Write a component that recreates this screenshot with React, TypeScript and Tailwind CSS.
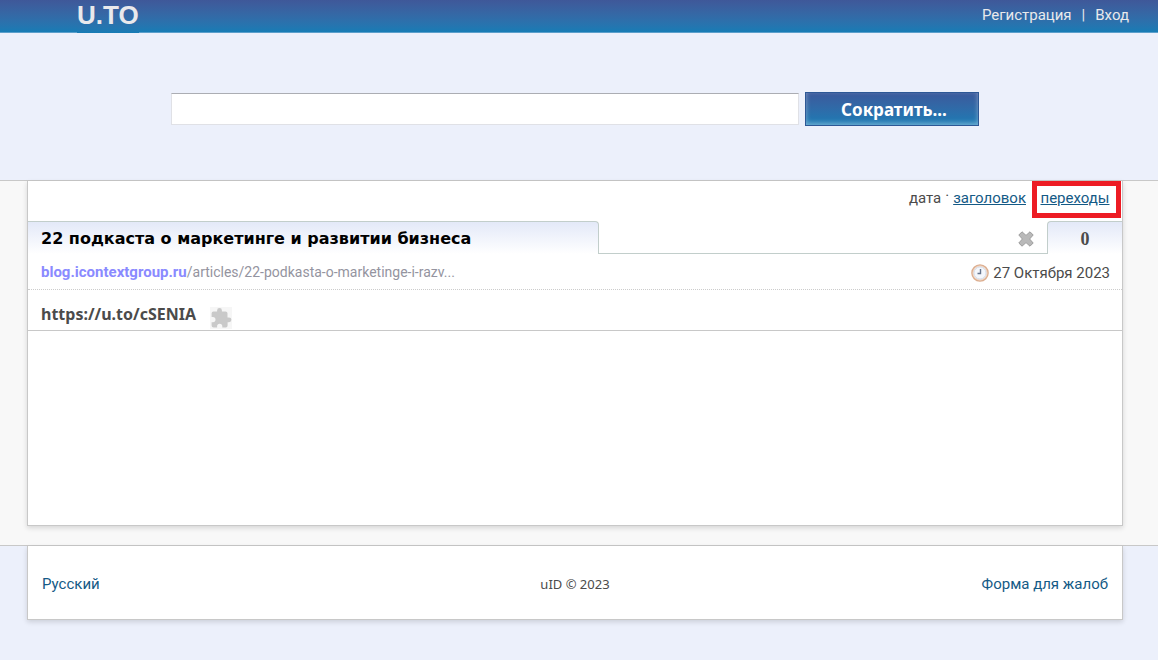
import type { ReactNode } from 'react';

interface ShortLink {
  title: string;
  domain: string;
  path: string;
  date: string;
  shortUrl: string;
  clicks: number;
}

const links: ShortLink[] = [
  {
    title: '22 подкаста о маркетинге и развитии бизнеса',
    domain: 'blog.icontextgroup.ru',
    path: '/articles/22-podkasta-o-marketinge-i-razv...',
    date: '27 Октября 2023',
    shortUrl: 'https://u.to/cSENIA',
    clicks: 0,
  },
];

function DeleteIcon() {
  return (
    <svg width="16" height="16" viewBox="0 0 16 16" aria-hidden="true">
      <path
        d="M4 .8 8 4.4 12 .8 15.2 4 11.6 8l3.6 4-3.2 3.2L8 11.6l-4 3.6L.8 12 4.4 8 .8 4z"
        fill="#b9b9b9"
        stroke="#9c9c9c"
        strokeWidth="1"
        strokeLinejoin="round"
      />
    </svg>
  );
}

function ClockIcon() {
  return (
    <svg width="18" height="18" viewBox="0 0 18 18" aria-hidden="true">
      <circle cx="9" cy="9" r="7.8" fill="#f7faff" stroke="#dcae90" strokeWidth="2" />
      <circle cx="9" cy="9" r="7" fill="none" stroke="#f3dccb" strokeWidth="1" />
      <circle cx="9" cy="9" r="6" fill="#f4f7fc" stroke="#ccd6e5" strokeWidth="0.8" />
      <path d="M9.500 5v4.500H6.500" fill="none" stroke="#66758e" strokeWidth="1.4" />
    </svg>
  );
}

function PuzzleIcon() {
  return (
    <svg width="22" height="22" viewBox="0 0 22 22" aria-hidden="true">
      <path fill="#f6f6f6" d="M0 0h22v22H0z" />
      <path
        fill="#c9c9c9"
        d="M19 10.4h-1.500v-4a2 2 0 0 0-2-2h-3.600V3.400a2.400 2.400 0 0 0-4.800 0v1H3.500a1.900 1.900 0 0 0-1.900 2v3.600h1.300a2.600 2.600 0 0 1 0 5.200H1.600v3.400a2 2 0 0 0 2 2h3.500v-1.300a2.600 2.600 0 0 1 5.200 0v1.300h3.300a2 2 0 0 0 2-2v-3.400H19a2.400 2.400 0 0 0 0-4.800z"
      />
    </svg>
  );
}

function Card({ children }: { children: ReactNode }) {
  return (
    <div className="mr-[35px] ml-[27px] border border-t-0 border-[#c8c8c8] bg-white shadow-[0_2px_5px_rgba(0,0,0,0.14)]">
      {children}
    </div>
  );
}

function LinkRow({ link }: { link: ShortLink }) {
  return (
    <article>
      <div className="flex h-[33px]">
        <h2 className="w-[571px] rounded-tr-sm border-t border-r border-[#c2cecb] bg-linear-to-b from-[#e3e9f8] to-white pt-[5px] pl-[13px] font-['DejaVu_Sans',sans-serif] text-base font-bold text-black">
          {link.title}
        </h2>
        <div className="flex flex-1 items-center justify-end border-b border-[#c2cecb] pt-1 pr-[13px]">
          <button type="button" aria-label="Удалить">
            <DeleteIcon />
          </button>
        </div>
        <div className="w-[75px] rounded-tl-sm border-t border-l border-[#c2cecb] bg-linear-to-b from-[#e3e9f8] to-white pt-[5px] text-center font-['Liberation_Serif',serif] text-lg leading-6 font-bold text-[#4b4b4b]">
          {link.clicks}
        </div>
      </div>
      <div className="flex h-9 items-center justify-between border-b border-dotted border-[#cccccc] pt-[2px] pr-3 pl-[13px]">
        <p className="text-sm text-[#9494a0]">
          <a href="#" className="text-[15px] font-bold text-[#8a8aff]">
            {link.domain}
          </a>
          {link.path}
        </p>
        <p className="flex items-center gap-1">
          <ClockIcon />
          {link.date}
        </p>
      </div>
      <div className="flex h-[41px] items-start gap-[14px] border-b border-[#c8c8c8] pl-[13px]">
        <span className="pt-[14px] font-['Noto_Sans',sans-serif] text-base leading-5 font-bold">
          {link.shortUrl}
        </span>
        <button type="button" aria-label="Дополнительно" className="pt-[17px]">
          <PuzzleIcon />
        </button>
      </div>
    </article>
  );
}

export default function App() {
  return (
    <div className="flex min-h-screen flex-col bg-[#ecf0fb] font-[Roboto,sans-serif] text-[15px] leading-5 text-[#4b4b4b]">
      <header className="flex h-[33px] justify-between border-b border-[#5b9fcb] bg-linear-to-b from-[#3f5899] to-[#167cb5] pr-[29px] pl-[77px]">
        <a
          href="#"
          className="h-[33px] bg-linear-to-b from-[#3f5899] to-[#167cb5] font-['Liberation_Sans',Arial,sans-serif] text-[26px] leading-[30px] font-bold text-[#e9e9ec]"
        >
          U.TO
        </a>
        <nav className="flex gap-[10px] pt-[5px] text-[#e9e9ec]">
          <a href="#">Регистрация</a>
          <span>|</span>
          <a href="#">Вход</a>
        </nav>
      </header>

      <form className="flex h-[148px] items-start gap-[6px] border-b border-[#c8c8c8] pt-[59px] pr-[179px] pl-[171px]">
        <input
          type="text"
          aria-label="Длинная ссылка"
          className="mt-px h-8 min-w-0 flex-1 border border-[#e0e1e6] border-t-[#abadb3] bg-white px-2"
        />
        <button
          type="button"
          className="h-[34px] w-[174px] border border-[#2d5896] bg-linear-to-b from-[#3a5a9c] to-[#167cb5] pt-[2px] pl-1 font-['Noto_Sans',sans-serif] text-[17px] font-bold text-white shadow-[inset_0_-2px_5px_rgba(255,255,255,0.4)]"
        >
          Сократить...
        </button>
      </form>

      <main className="border-b border-[#c8c8c8] bg-[#f8f8f8] pb-[19px]">
        <Card>
          <div className="min-h-[344px]">
            <nav className="flex h-10 items-start justify-end pr-px">
              <span className="pt-[7px]">дата</span>
              <span className="px-1 pt-[5px]">·</span>
              <a href="#" className="pt-[7px] text-[#145a86] underline">
                заголовок
              </a>
              <a
                href="#"
                className="ml-[6px] h-[37px] w-[89px] border-5 border-[#ed1c24] pt-[2px] pr-[3px] text-center text-[#145a86] underline"
              >
                переходы
              </a>
            </nav>
            {links.map((link) => (
              <LinkRow key={link.shortUrl} link={link} />
            ))}
          </div>
        </Card>
      </main>

      <footer>
        <Card>
          <div className="grid h-[73px] grid-cols-3 items-center px-[14px] pt-[2px]">
            <a href="#" className="text-[#145a86]">
              Русский
            </a>
            <span className="text-center font-['Noto_Sans',sans-serif] text-[13px]">
              uID © 2023
            </span>
            <a href="#" className="text-right text-[#145a86]">
              Форма для жалоб
            </a>
          </div>
        </Card>
      </footer>
    </div>
  );
}
